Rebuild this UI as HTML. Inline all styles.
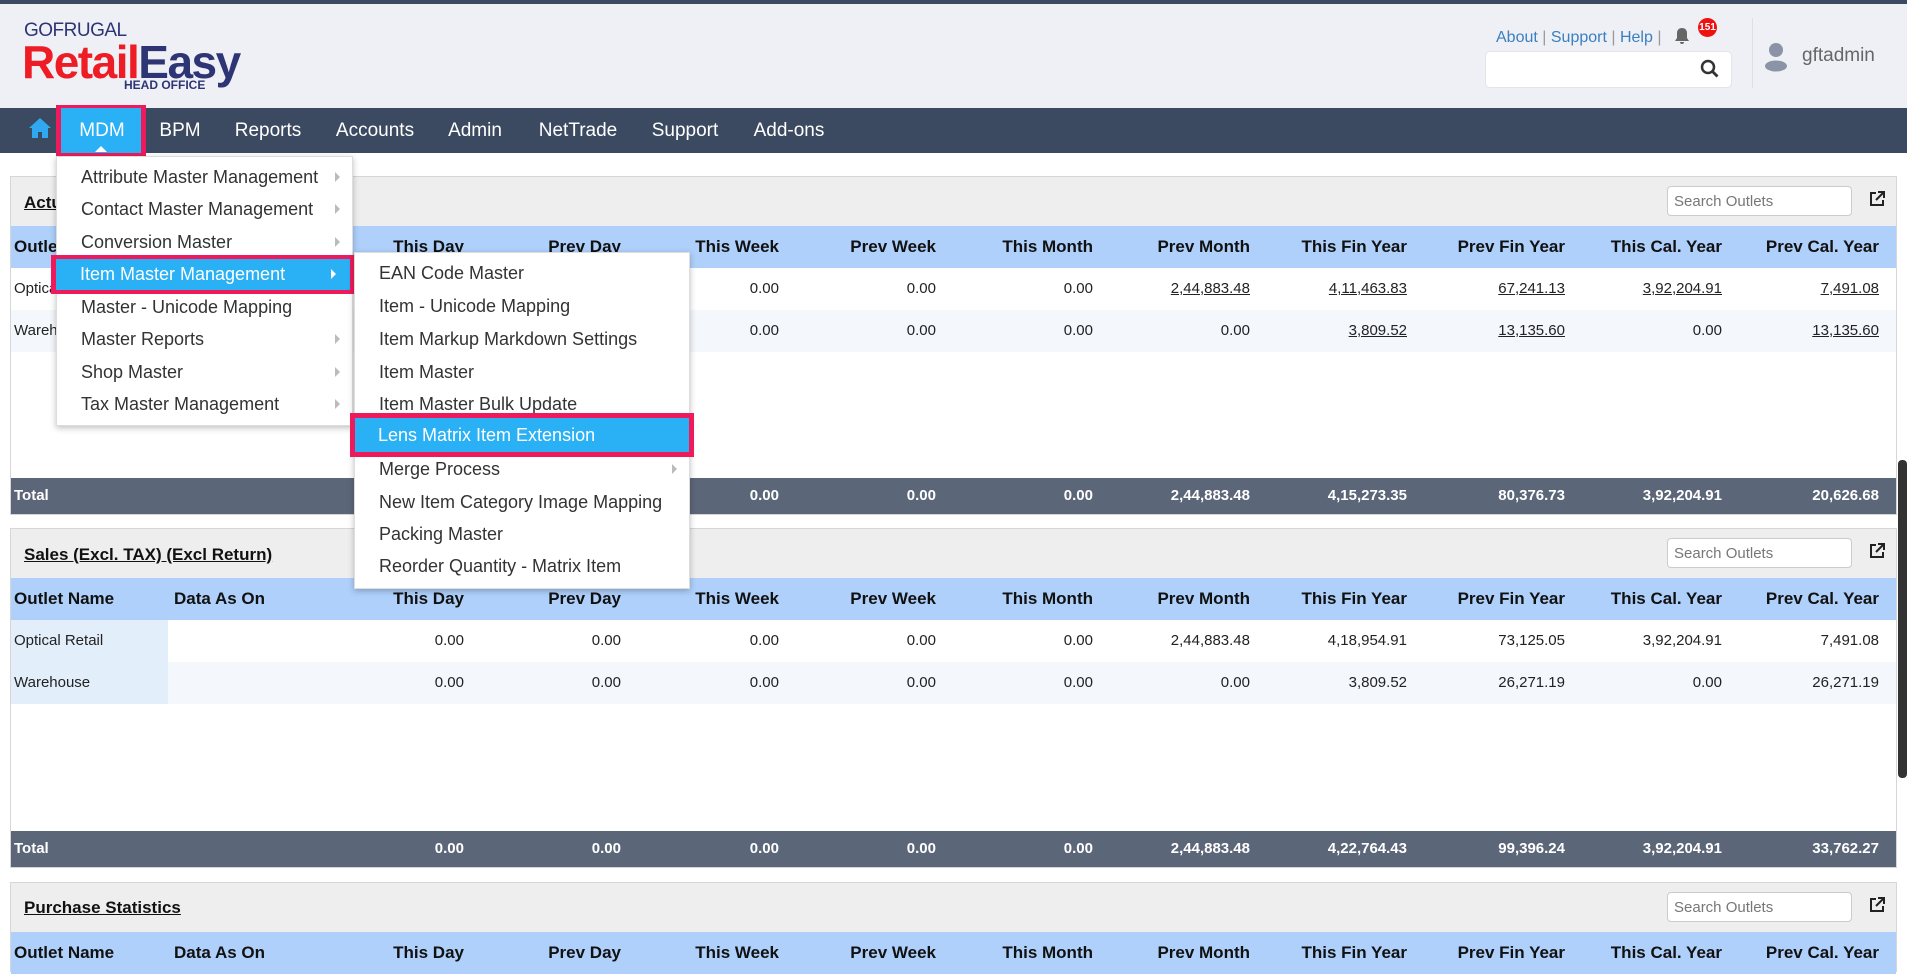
<!DOCTYPE html>
<html><head><meta charset="utf-8"><style>
*{box-sizing:border-box;margin:0;padding:0}
body{width:1907px;height:964px;overflow:hidden;background:#fff;font-family:"Liberation Sans",sans-serif;position:relative;color:#222}
.a{position:absolute}
.hdr{left:0;top:0;width:1907px;height:108px;background:#eef0f5;border-top:4px solid #3b4a60}
.nav{left:0;top:108px;width:1907px;height:45px;background:#3b4a60}
.nv{top:108px;height:45px;line-height:45px;color:#fff;font-size:19px;transform:translateX(-50%)}
.panel{left:10px;width:1887px;background:#eeeeee;border:1px solid #d6d6d6}
.th{left:0;width:1885px;height:42px;background:#aed0fb}
.th span,.tr span,.tt span{position:absolute;white-space:nowrap}
.th span{font-weight:bold;font-size:17px;top:11px;color:#111}
.tr{left:0;width:1885px;height:42px;background:#fff}
.tr span{font-size:15px;top:12px;color:#222}
.tt{left:0;width:1885px;height:36px;background:#5b6678}
.tt span{font-size:15px;top:9px;color:#fff;font-weight:bold}
.u{text-decoration:underline}
.so{width:185px;height:30px;background:#fff;border:1px solid #ccc;border-radius:4px;font-size:15px;color:#777;padding:6px 6px}
.title{font-weight:bold;font-size:17px;text-decoration:underline;color:#111}
.menu{background:#fff;box-shadow:0 2px 6px rgba(0,0,0,.25);border:1px solid #ddd}
.mi{position:absolute;left:0;right:0;height:33px;line-height:33px;font-size:18px;color:#333;white-space:nowrap}
.ar{position:absolute;right:12px;top:11px;width:0;height:0;border-top:5px solid transparent;border-bottom:5px solid transparent;border-left:5px solid #bbb}
</style></head><body>
<div class="a hdr"></div>
<div class="a" style="left:24px;top:20px;font-size:19px;color:#2e3575;letter-spacing:-0.5px">GOFRUGAL</div>
<div class="a" style="left:22px;top:36px;font-size:46px;font-weight:bold;letter-spacing:-1.5px;line-height:52px"><span style="color:#ee1c25">Retail</span><span style="color:#2e3575">Easy</span></div>
<div class="a" style="left:124px;top:78px;font-size:12px;font-weight:bold;color:#2e3575">HEAD OFFICE</div>

<div class="a" style="left:1496px;top:29px;font-size:16px;color:#3a7fc0">About <span style="color:#999">|</span> Support <span style="color:#999">|</span> Help <span style="color:#999">|</span></div>
<svg class="a" style="left:1672px;top:26px" width="20" height="20" viewBox="0 0 20 20"><path d="M10 2c-3 0-5 2-5 5v5l-2 3h14l-2-3V7c0-3-2-5-5-5zM8 16a2 2 0 004 0z" fill="#666"/></svg>
<div class="a" style="left:1698px;top:18px;width:19px;height:19px;border-radius:50%;background:#e11;color:#fff;font-size:10px;font-weight:bold;line-height:19px;text-align:center">151</div>
<div class="a" style="left:1485px;top:51px;width:247px;height:37px;background:#fff;border:1px solid #e2e4ea;border-radius:5px"></div>
<svg class="a" style="left:1700px;top:59px" width="20" height="20" viewBox="0 0 20 20"><circle cx="8" cy="8" r="6" stroke="#333" stroke-width="2.5" fill="none"/><path d="M12.5 12.5l5 5" stroke="#333" stroke-width="2.8"/></svg>
<div class="a" style="left:1752px;top:18px;width:1px;height:70px;background:#dcdfe5"></div>
<svg class="a" style="left:1764px;top:42px" width="24" height="30" viewBox="0 0 24 30"><circle cx="12" cy="8" r="7" fill="#8a94a6"/><ellipse cx="12" cy="24" rx="11" ry="5.5" fill="#8a94a6"/></svg>
<div class="a" style="left:1802px;top:45px;font-size:19px;color:#666">gftadmin</div>

<div class="a nav"></div>
<svg class="a" style="left:28px;top:116px" width="24" height="24" viewBox="0 0 24 24"><path d="M12 2L1 12h3v10h6v-6h4v6h6V12h3z" fill="#2ea8f0"/></svg>
<div class="a" style="left:56px;top:105px;width:90px;height:51px;background:#ef1a5b"></div>
<div class="a" style="left:61px;top:108px;width:80px;height:45px;background:#29b0f5"></div>
<div class="a" style="left:95px;top:146px;width:0;height:0;border-left:6px solid transparent;border-right:6px solid transparent;border-bottom:6px solid #fff"></div>
<div class="a nv" style="left:102px">MDM</div>
<div class="a nv" style="left:180px">BPM</div>
<div class="a nv" style="left:268px">Reports</div>
<div class="a nv" style="left:375px">Accounts</div>
<div class="a nv" style="left:475px">Admin</div>
<div class="a nv" style="left:578px">NetTrade</div>
<div class="a nv" style="left:685px">Support</div>
<div class="a nv" style="left:789px">Add-ons</div>

<!-- panel 1 -->
<div class="a panel" style="top:176px;height:339px">
 <div class="a title" style="left:13px;top:16px">Actual Sales</div>
 <div class="a so" style="left:1656px;top:9px">Search Outlets</div>
 <svg class="a" style="left:1858px;top:14px" width="16" height="16" viewBox="0 0 16 16"><path d="M7 2H2v12h12V9M9 1h6v6M15 1L7 9" stroke="#222" stroke-width="2" fill="none"/></svg>
 <div class="a th" style="top:49px"><span style="left:3px">Outlet Name</span><span style="left:163px">Data As On</span>
 <span style="right:1432px">This Day</span><span style="right:1275px">Prev Day</span><span style="right:1117px">This Week</span><span style="right:960px">Prev Week</span><span style="right:803px">This Month</span><span style="right:646px">Prev Month</span><span style="right:489px">This Fin Year</span><span style="right:331px">Prev Fin Year</span><span style="right:174px">This Cal. Year</span><span style="right:17px">Prev Cal. Year</span></div>
 <div class="a" style="left:0;top:91px;width:1885px;height:210px;background:#fff"></div>
 <div class="a tr" style="top:91px"><span style="left:3px">Optical Retail</span>
 <span style="right:1117px">0.00</span><span style="right:960px">0.00</span><span style="right:803px">0.00</span><span class="u" style="right:646px">2,44,883.48</span><span class="u" style="right:489px">4,11,463.83</span><span class="u" style="right:331px">67,241.13</span><span class="u" style="right:174px">3,92,204.91</span><span class="u" style="right:17px">7,491.08</span></div>
 <div class="a tr" style="top:133px;background:#f4f7fb"><span style="left:3px">Warehouse</span>
 <span style="right:1117px">0.00</span><span style="right:960px">0.00</span><span style="right:803px">0.00</span><span style="right:646px">0.00</span><span class="u" style="right:489px">3,809.52</span><span class="u" style="right:331px">13,135.60</span><span style="right:174px">0.00</span><span class="u" style="right:17px">13,135.60</span></div>
 <div class="a tt" style="top:301px"><span style="left:3px">Total</span><span style="right:1432px">0.00</span><span style="right:1275px">0.00</span><span style="right:1117px">0.00</span><span style="right:960px">0.00</span><span style="right:803px">0.00</span><span style="right:646px">2,44,883.48</span><span style="right:489px">4,15,273.35</span><span style="right:331px">80,376.73</span><span style="right:174px">3,92,204.91</span><span style="right:17px">20,626.68</span></div>
</div>

<!-- panel 2 -->
<div class="a panel" style="top:528px;height:340px">
 <div class="a title" style="left:13px;top:16px">Sales (Excl. TAX) (Excl Return)</div>
 <div class="a so" style="left:1656px;top:9px">Search Outlets</div>
 <svg class="a" style="left:1858px;top:14px" width="16" height="16" viewBox="0 0 16 16"><path d="M7 2H2v12h12V9M9 1h6v6M15 1L7 9" stroke="#222" stroke-width="2" fill="none"/></svg>
 <div class="a th" style="top:49px"><span style="left:3px">Outlet Name</span><span style="left:163px">Data As On</span>
 <span style="right:1432px">This Day</span><span style="right:1275px">Prev Day</span><span style="right:1117px">This Week</span><span style="right:960px">Prev Week</span><span style="right:803px">This Month</span><span style="right:646px">Prev Month</span><span style="right:489px">This Fin Year</span><span style="right:331px">Prev Fin Year</span><span style="right:174px">This Cal. Year</span><span style="right:17px">Prev Cal. Year</span></div>
 <div class="a" style="left:0;top:91px;width:1885px;height:211px;background:#fff"></div>
 <div class="a tr" style="top:91px"><div class="a" style="left:0;top:0;width:157px;height:42px;background:#e3eefb"></div><span style="left:3px">Optical Retail</span>
 <span style="right:1432px">0.00</span><span style="right:1275px">0.00</span><span style="right:1117px">0.00</span><span style="right:960px">0.00</span><span style="right:803px">0.00</span><span style="right:646px">2,44,883.48</span><span style="right:489px">4,18,954.91</span><span style="right:331px">73,125.05</span><span style="right:174px">3,92,204.91</span><span style="right:17px">7,491.08</span></div>
 <div class="a tr" style="top:133px;background:#f4f7fb"><div class="a" style="left:0;top:0;width:157px;height:42px;background:#e3eefb"></div><span style="left:3px">Warehouse</span>
 <span style="right:1432px">0.00</span><span style="right:1275px">0.00</span><span style="right:1117px">0.00</span><span style="right:960px">0.00</span><span style="right:803px">0.00</span><span style="right:646px">0.00</span><span style="right:489px">3,809.52</span><span style="right:331px">26,271.19</span><span style="right:174px">0.00</span><span style="right:17px">26,271.19</span></div>
 <div class="a tt" style="top:302px"><span style="left:3px">Total</span><span style="right:1432px">0.00</span><span style="right:1275px">0.00</span><span style="right:1117px">0.00</span><span style="right:960px">0.00</span><span style="right:803px">0.00</span><span style="right:646px">2,44,883.48</span><span style="right:489px">4,22,764.43</span><span style="right:331px">99,396.24</span><span style="right:174px">3,92,204.91</span><span style="right:17px">33,762.27</span></div>
</div>

<!-- panel 3 -->
<div class="a panel" style="top:882px;height:90px">
 <div class="a title" style="left:13px;top:15px">Purchase Statistics</div>
 <div class="a so" style="left:1656px;top:9px">Search Outlets</div>
 <svg class="a" style="left:1858px;top:14px" width="16" height="16" viewBox="0 0 16 16"><path d="M7 2H2v12h12V9M9 1h6v6M15 1L7 9" stroke="#222" stroke-width="2" fill="none"/></svg>
 <div class="a th" style="top:49px"><span style="left:3px">Outlet Name</span><span style="left:163px">Data As On</span>
 <span style="right:1432px">This Day</span><span style="right:1275px">Prev Day</span><span style="right:1117px">This Week</span><span style="right:960px">Prev Week</span><span style="right:803px">This Month</span><span style="right:646px">Prev Month</span><span style="right:489px">This Fin Year</span><span style="right:331px">Prev Fin Year</span><span style="right:174px">This Cal. Year</span><span style="right:17px">Prev Cal. Year</span></div>
</div>
<div class="a" style="left:1898px;top:460px;width:9px;height:318px;background:#333;border-radius:4px"></div>

<!-- main menu -->
<div class="a menu" style="left:56px;top:156px;width:297px;height:270px">
 <div class="mi" style="top:4px;padding-left:24px">Attribute Master Management<i class="ar"></i></div>
 <div class="mi" style="top:36px;padding-left:24px">Contact Master Management<i class="ar"></i></div>
 <div class="mi" style="top:69px;padding-left:24px">Conversion Master<i class="ar"></i></div>
 <div class="mi" style="top:134px;padding-left:24px">Master - Unicode Mapping</div>
 <div class="mi" style="top:166px;padding-left:24px">Master Reports<i class="ar"></i></div>
 <div class="mi" style="top:199px;padding-left:24px">Shop Master<i class="ar"></i></div>
 <div class="mi" style="top:231px;padding-left:24px">Tax Master Management<i class="ar"></i></div>
</div>
<div class="a" style="left:51px;top:255px;width:304px;height:39px;background:#ef1a5b"></div>
<div class="a" style="left:56px;top:259px;width:294px;height:31px;background:#29b0f5;color:#fff;font-size:18px;line-height:31px;padding-left:24px">Item Master Management<i class="ar" style="border-left-color:#fff;top:10px;right:14px"></i></div>

<!-- submenu -->
<div class="a menu" style="left:354px;top:252px;width:336px;height:337px">
 <div class="mi" style="top:4px;padding-left:24px">EAN Code Master</div>
 <div class="mi" style="top:37px;padding-left:24px">Item - Unicode Mapping</div>
 <div class="mi" style="top:70px;padding-left:24px">Item Markup Markdown Settings</div>
 <div class="mi" style="top:103px;padding-left:24px">Item Master</div>
 <div class="mi" style="top:135px;padding-left:24px">Item Master Bulk Update</div>
 <div class="mi" style="top:200px;padding-left:24px">Merge Process<i class="ar"></i></div>
 <div class="mi" style="top:233px;padding-left:24px">New Item Category Image Mapping</div>
 <div class="mi" style="top:265px;padding-left:24px">Packing Master</div>
 <div class="mi" style="top:297px;padding-left:24px">Reorder Quantity - Matrix Item</div>
</div>
<div class="a" style="left:350px;top:413px;width:344px;height:44px;background:#ef1a5b"></div>
<div class="a" style="left:355px;top:418px;width:334px;height:34px;background:#29b0f5;color:#fff;font-size:18px;line-height:34px;padding-left:23px">Lens Matrix Item Extension</div>
</body></html>
